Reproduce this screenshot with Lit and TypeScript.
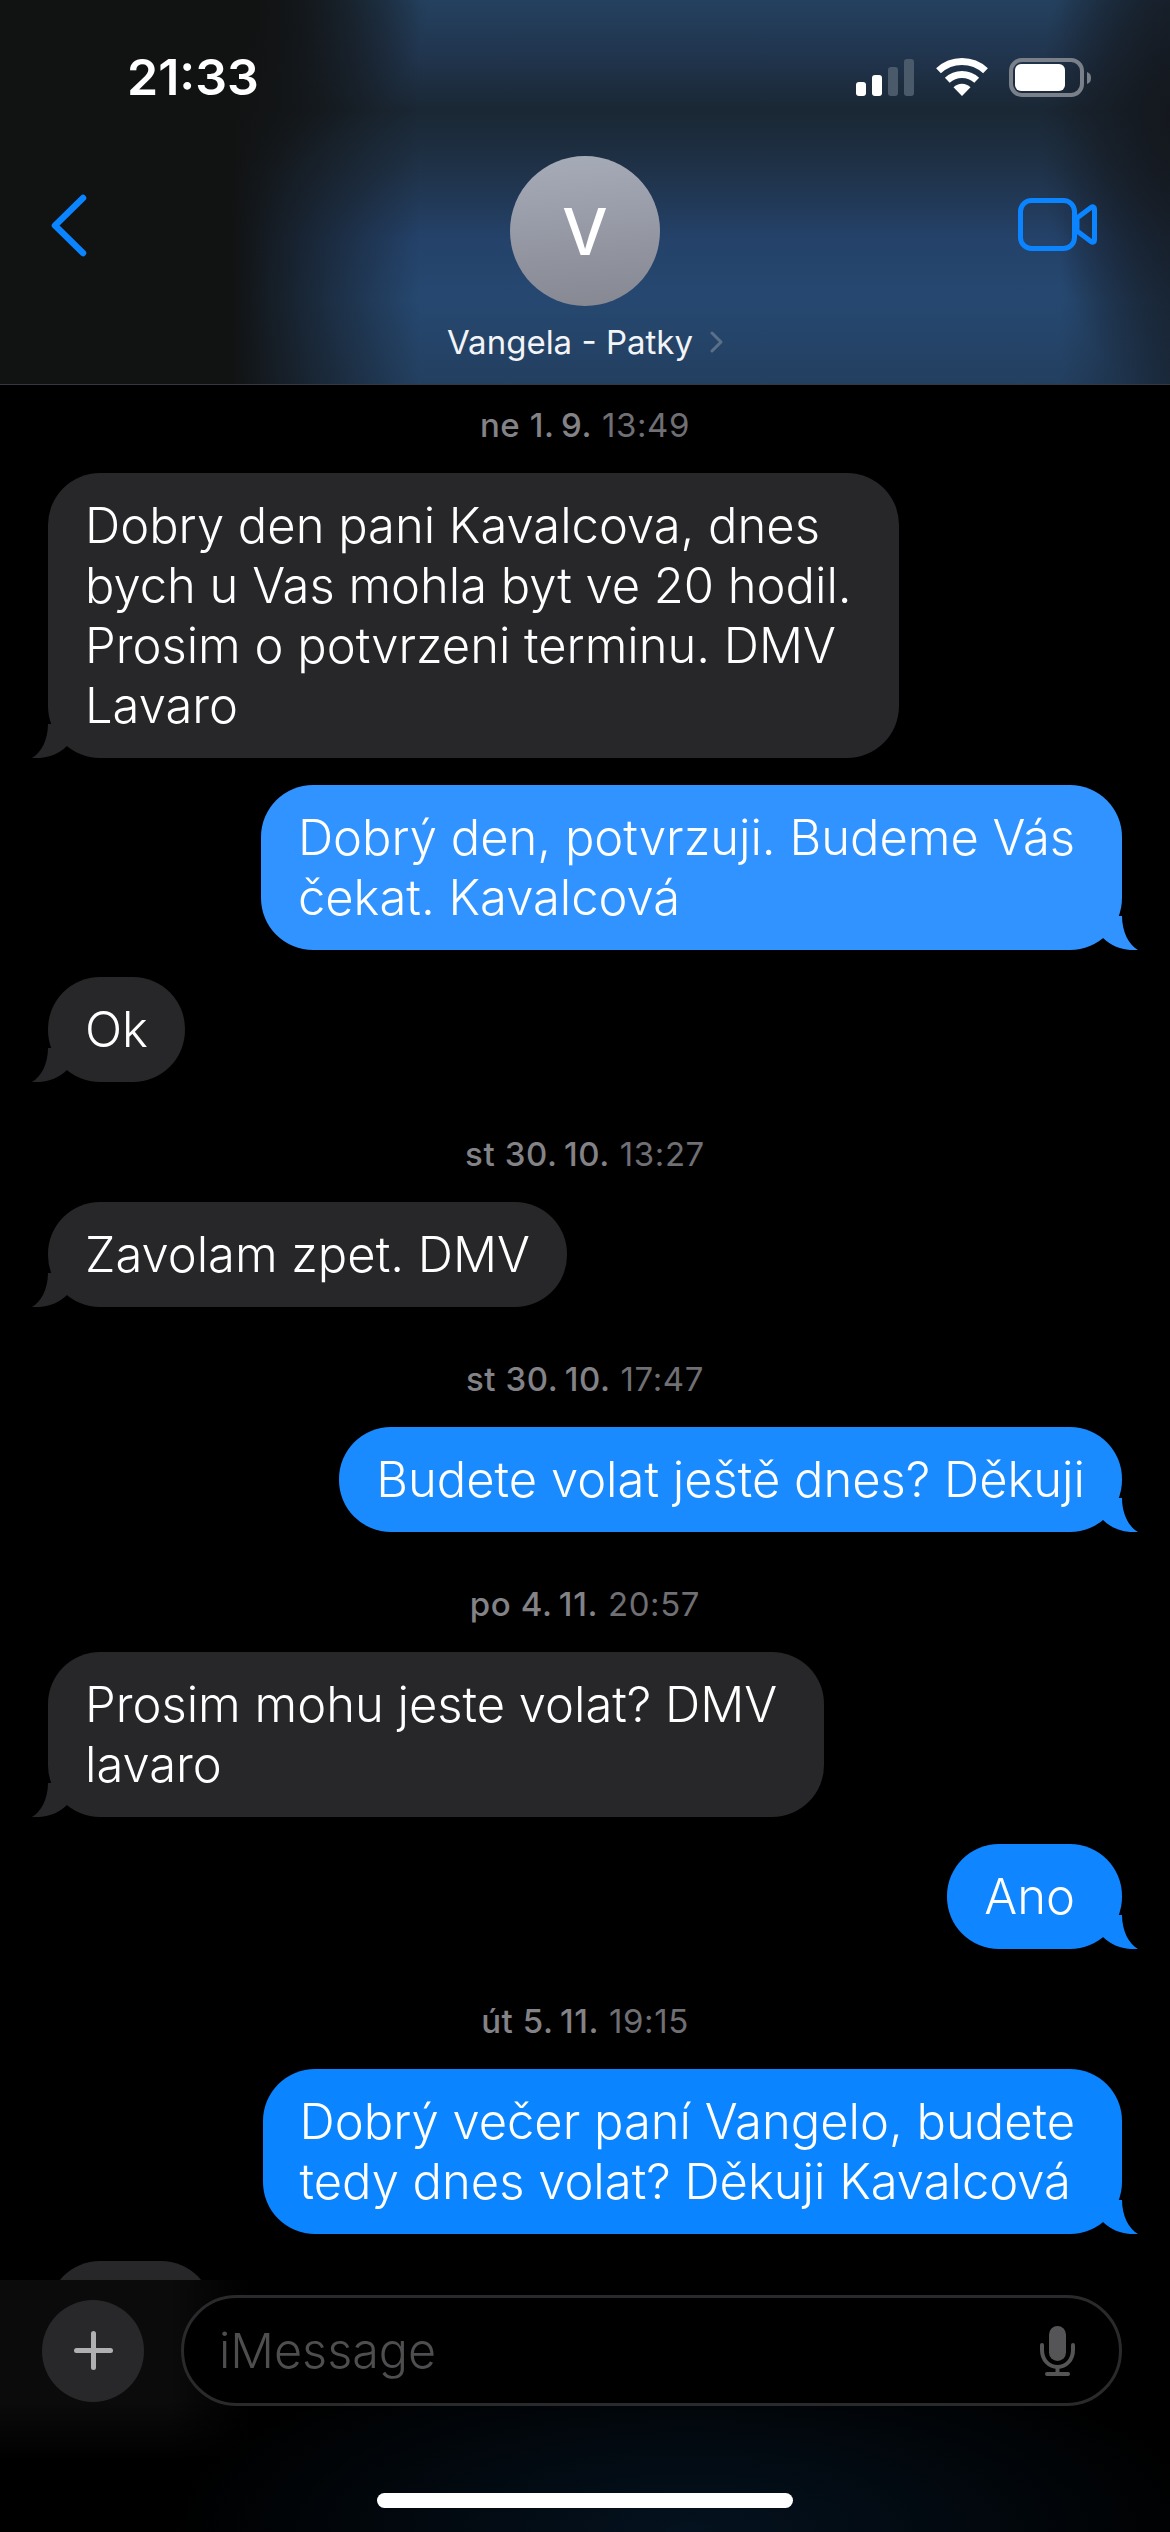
import { LitElement, html, css } from 'lit';
import { customElement } from 'lit/decorators.js';

type Item =
  | { kind: 'time'; day: string; at: string }
  | { kind: 'in' | 'out'; lines: string[]; fill: string; width?: number; roomy?: boolean };

const GRAY = '#272729';

const items: Item[] = [
  { kind: 'time', day: 'ne 1.\u20099.', at: '13:49' },
  { kind: 'in', fill: GRAY, roomy: true, lines: ['Dobry den pani Kavalcova, dnes', 'bych u Vas mohla byt ve 20 hodil.', 'Prosim o potvrzeni terminu. DMV', 'Lavaro'] },
  { kind: 'out', fill: '#3093ff', roomy: true, lines: ['Dobrý den, potvrzuji. Budeme Vás', 'čekat. Kavalcová'] },
  { kind: 'in', fill: GRAY, lines: ['Ok'] },
  { kind: 'time', day: 'st 30.\u200910.', at: '13:27' },
  { kind: 'in', fill: GRAY, lines: ['Zavolam zpet. DMV'] },
  { kind: 'time', day: 'st 30.\u200910.', at: '17:47' },
  { kind: 'out', fill: '#1a8bff', lines: ['Budete volat ještě dnes? Děkuji'] },
  { kind: 'time', day: 'po 4.\u200911.', at: '20:57' },
  { kind: 'in', fill: GRAY, roomy: true, lines: ['Prosim mohu jeste volat? DMV', 'lavaro'] },
  { kind: 'out', fill: '#0f86ff', roomy: true, lines: ['Ano'] },
  { kind: 'time', day: 'út 5.\u200911.', at: '19:15' },
  { kind: 'out', fill: '#0a84ff', roomy: true, lines: ['Dobrý večer paní Vangelo, budete', 'tedy dnes volat? Děkuji Kavalcová'] },
  // only the top of this one shows above the input bar
  { kind: 'in', fill: GRAY, lines: ['\u00a0'], width: 165 },
];

@customElement('app-root')
export class AppRoot extends LitElement {
  static styles = css`
    :host {
      display: block;
      position: relative;
      width: 1170px;
      height: 2532px;
      overflow: hidden;
      background: #000;
      color: #fff;
      font-family: Inter, "Liberation Sans", sans-serif;
    }
    .head {
      height: 385px;
      box-sizing: border-box;
      padding-top: 58px;
      border-bottom: 1px solid #35393d;
      background:
        radial-gradient(ellipse 430px 230px at 0 0, #111212 55%, rgba(17, 18, 18, 0) 100%),
        linear-gradient(90deg, #111212 0, #111212 230px, rgba(17, 18, 18, 0) 420px),
        radial-gradient(ellipse 130px 280px at 100% 120px, #14181e 0, rgba(20, 24, 30, 0) 100%),
        linear-gradient(90deg, rgba(20, 26, 34, 0) 1060px, rgba(20, 26, 34, 0.6) 1170px),
        linear-gradient(180deg, #24415f 0, #213650 50px, #1a2734 110px, #1f3248 170px, #24426a 240px, #264870 300px, #233f60 385px);
    }
    .status {
      display: flex;
      justify-content: space-between;
      height: 39px;
      padding: 0 79px 0 127px;
      margin-bottom: 59px;
    }
    .clock {
      font-size: 50px;
      font-weight: 600;
      line-height: 39px;
    }
    .nav {
      display: grid;
      grid-template-columns: 1fr auto 1fr;
    }
    .back {
      margin: 38px 0 0 51px;
    }
    .video {
      justify-self: end;
      margin: 42px 73px 0 0;
    }
    .who {
      display: flex;
      flex-direction: column;
      align-items: center;
    }
    .avatar {
      width: 150px;
      height: 150px;
      border-radius: 50%;
      display: flex;
      align-items: center;
      justify-content: center;
      background: linear-gradient(175deg, #a7acb9, #858791);
      font-size: 64px;
      font-weight: 500;
    }
    .name {
      display: flex;
      align-items: center;
      gap: 17px;
      margin-top: 16px;
      font-size: 33px;
      line-height: 40px;
      white-space: nowrap;
      color: #f2f4f7;
    }
    .thread {
      display: flex;
      flex-direction: column;
      align-items: flex-start;
    }
    .time {
      align-self: stretch;
      height: 48px;
      margin: 48px 0 24px;
      text-align: center;
      font-size: 33px;
      line-height: 48px;
      letter-spacing: 0.6px;
      color: #6f6f74;
    }
    .time b {
      font-weight: 500;
      color: #838387;
    }
    .thread .time:first-child {
      margin-top: 16px;
    }
    .bubble {
      position: relative;
      box-sizing: border-box;
      margin: 0 0 27px 48px;
      padding: 22.5px 37px;
      border-radius: 52px;
      font-size: 48.9px;
      font-weight: 350;
      line-height: 60px;
      white-space: nowrap;
    }
    .bubble.roomy {
      padding-right: 47px;
    }
    .bubble.out {
      align-self: flex-end;
      margin: 0 48px 27px 0;
    }
    .bubble:has(+ .time) {
      margin-bottom: 0;
    }
    .tail {
      position: absolute;
      left: -16px;
      bottom: 0;
    }
    .out .tail {
      left: auto;
      right: -16px;
      transform: scaleX(-1);
    }
    .foot {
      position: absolute;
      left: 0;
      right: 0;
      bottom: 0;
      height: 252px;
      box-sizing: border-box;
      padding-top: 15px;
      background:
        radial-gradient(ellipse 520px 190px at 690px 100%, #04121f 0, rgba(4, 18, 31, 0) 100%),
        linear-gradient(180deg, rgba(0, 0, 0, 0) 120px, #000 180px),
        linear-gradient(90deg, #0b0b0b 0, #0b0b0b 170px, #000 250px);
    }
    .bar {
      display: flex;
      align-items: center;
      gap: 37px;
      padding: 0 48px 0 42px;
    }
    .plus {
      position: relative;
      flex: none;
      width: 102px;
      height: 102px;
      border-radius: 50%;
      display: flex;
      align-items: center;
      justify-content: center;
      background: #28282a;
    }
    .field {
      flex: 1;
      height: 111px;
      box-sizing: border-box;
      padding: 0 44px 0 35px;
      display: flex;
      align-items: center;
      justify-content: space-between;
      border: 3px solid #2a2a2c;
      border-radius: 56px;
      background: #000;
    }
    .hint {
      font-size: 48.5px;
      font-weight: 350;
      color: #4e4e50;
    }
    .home {
      width: 416px;
      height: 15px;
      margin: 87px auto 0;
      border-radius: 8px;
      background: #fff;
    }
  `;

  private icons() {
    return html`
      <svg width="235" height="39" viewBox="0 0 235 39">
        <rect x="0" y="24" width="10" height="14" rx="3" fill="#fff"></rect>
        <rect x="16" y="17" width="10" height="21" rx="3" fill="#fff"></rect>
        <rect x="32" y="9" width="10" height="29" rx="3" fill="#4b5a6a"></rect>
        <rect x="48" y="1" width="10" height="37" rx="3" fill="#4b5a6a"></rect>
        <g transform="translate(80 0)" fill="none" stroke="#fff" stroke-width="7">
          <path d="M2.5 12.8 A34.5 34.5 0 0 1 49.5 12.8"></path>
          <path d="M11.3 22.3 A21.5 21.5 0 0 1 40.7 22.3"></path>
          <path d="M26 38 L17.5 29.2 A12 12 0 0 1 34.5 29.2 Z" fill="#fff" stroke="none"></path>
        </g>
        <rect x="155" y="2" width="71" height="35" rx="11" fill="none" stroke="#7a808a" stroke-width="4"></rect>
        <rect x="159" y="6" width="50" height="27" rx="6" fill="#fff"></rect>
        <path d="M231 14 C234 15 235 17 235 20 C235 23 234 25 231 26 Z" fill="#7a808a"></path>
      </svg>
    `;
  }

  private renderItem(item: Item) {
    if (item.kind === 'time') {
      return html`<div class="time"><b>${item.day}</b> ${item.at}</div>`;
    }
    const cls = `bubble ${item.kind} ${item.roomy ? 'roomy' : ''}`;
    const width = item.width ? `width:${item.width}px;` : '';
    return html`
      <div class=${cls} style="background:${item.fill};${width}">
        ${item.lines.map((l, i) => html`${i ? html`<br />` : ''}${l}`)}
        <svg class="tail" width="52" height="34" viewBox="0 0 52 34">
          <path d="M16 0 C16 16 9 29 0 34 C13 35 26 31 35 22 L50 0 Z" fill=${item.fill}></path>
        </svg>
      </div>
    `;
  }

  render() {
    return html`
      <div class="head">
        <div class="status">
          <div class="clock">21:33</div>
          ${this.icons()}
        </div>
        <div class="nav">
          <svg class="back" width="36" height="63" viewBox="0 0 36 63">
            <path d="M32 4 L4 31.5 L32 59" fill="none" stroke="#0a84ff" stroke-width="6.5" stroke-linecap="round" stroke-linejoin="round"></path>
          </svg>
          <div class="who">
            <div class="avatar">V</div>
            <div class="name">
              Vangela - Patky
              <svg width="13" height="22" viewBox="0 0 13 22">
                <path d="M2 2 L11 11 L2 20" fill="none" stroke="#5a6f88" stroke-width="3" stroke-linecap="round" stroke-linejoin="round"></path>
              </svg>
            </div>
          </div>
          <svg class="video" width="79" height="53" viewBox="0 0 79 53">
            <rect x="2.5" y="2.5" width="54" height="48" rx="11" fill="none" stroke="#0a84ff" stroke-width="5"></rect>
            <path d="M59 20 L73 9.5 C75 8 76.5 9 76.5 11 L76.5 42 C76.5 44 75 45 73 43.5 L59 33 Z" fill="none" stroke="#0a84ff" stroke-width="5" stroke-linejoin="round"></path>
          </svg>
        </div>
      </div>
      <div class="thread">${items.map((it) => this.renderItem(it))}</div>
      <div class="foot">
        <div class="bar">
          <div class="plus">
            <svg width="39" height="39" viewBox="0 0 39 39">
              <path d="M19.5 2.5 V36.5 M2.5 19.5 H36.5" stroke="#b0b0b2" stroke-width="5" stroke-linecap="round"></path>
            </svg>
          </div>
          <div class="field">
            <span class="hint">iMessage</span>
            <svg width="35" height="50" viewBox="0 0 35 50">
              <rect x="9" y="0" width="17" height="35" rx="8.5" fill="#555557"></rect>
              <path d="M2 19 V24 C2 34 9 41 17.5 41 C26 41 33 34 33 24 V19 M17.5 41 V47" fill="none" stroke="#555557" stroke-width="4" stroke-linecap="round"></path>
              <rect x="5" y="46" width="25" height="4" rx="2" fill="#555557"></rect>
            </svg>
          </div>
        </div>
        <div class="home"></div>
      </div>
    `;
  }
}
